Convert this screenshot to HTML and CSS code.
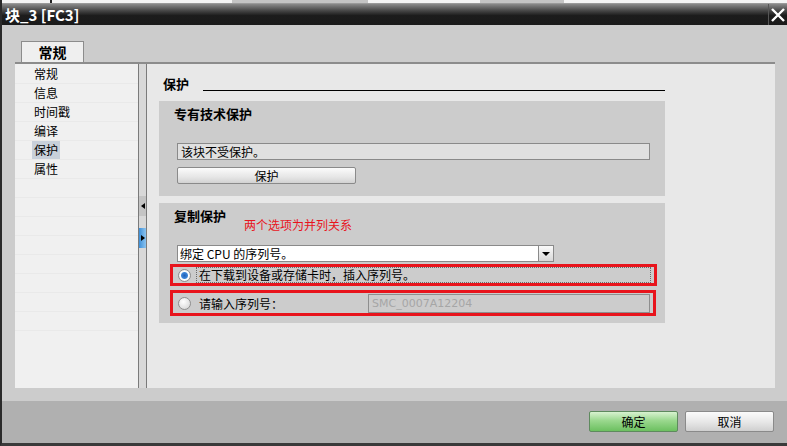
FILE: index.html
```html
<!DOCTYPE html>
<html lang="zh">
<head>
  <meta charset="UTF-8" />
  <title>块_3 [FC3]</title>
  <link rel="stylesheet" href="styles.css">
</head>
<body>
  <div class="window">
    <div class="topstrip">
      <span class="seg seg-a"></span>
      <span class="seg seg-b"></span>
      <span class="seg seg-c"></span>
    </div>
    <div class="titlebar">
      <span class="title">块_3 [FC3]</span>
      <span class="close">
        <svg width="16" height="16" viewBox="0 0 16 16"><path d="M2 2 L14 14 M14 2 L2 14" stroke="#fff" stroke-width="2.4" fill="none"/></svg>
      </span>
    </div>

    <div class="dialog">
      <div class="tabs">
        <div class="tab">常规</div>
      </div>

      <div class="panel">
        <ul class="nav">
          <li>常规</li>
          <li>信息</li>
          <li>时间戳</li>
          <li>编译</li>
          <li><span class="selected">保护</span></li>
          <li>属性</li>
          <li></li>
          <li></li>
          <li></li>
          <li></li>
          <li></li>
          <li></li>
          <li></li>
          <li></li>
        </ul>

        <div class="splitter">
          <div class="split-btn"><span class="tri-left"></span></div>
          <div class="split-btn active"><span class="tri-right"></span></div>
        </div>

        <div class="content">
          <div class="heading">
            <span class="heading-text">保护</span>
            <span class="heading-line"></span>
          </div>

          <div class="section sec-know">
            <div class="sec-title">专有技术保护</div>
            <div class="field">该块不受保护。</div>
            <button class="btn-protect">保护</button>
          </div>

          <div class="section sec-copy">
            <div class="sec-head">
              <span class="sec-title">复制保护</span>
              <span class="note">两个选项为并列关系</span>
            </div>
            <div class="select-row">
              <div class="select">绑定 CPU 的序列号。</div>
              <div class="select-arrow"><span class="tri-down"></span></div>
            </div>
            <div class="option opt-1">
              <span class="radio checked"></span>
              <span class="focus">在下载到设备或存储卡时，插入序列号。</span>
            </div>
            <div class="option opt-2">
              <span class="radio"></span>
              <span class="opt-label">请输入序列号：</span>
              <span class="serial">SMC_0007A12204</span>
            </div>
          </div>
        </div>
      </div>

      <div class="footer">
        <button class="btn btn-ok">确定</button>
        <button class="btn btn-cancel">取消</button>
      </div>
    </div>
  </div>
</body>
</html>
```

FILE: styles.css
```css
* {
  box-sizing: border-box;
}
body {
  margin: 0;
  font-family: "Noto Sans CJK SC", "DejaVu Sans", sans-serif;
  font-size: 12px;
  color: #000;
  background: #ccc;
}
.window {
  width: 787px;
  height: 446px;
  display: flex;
  flex-direction: column;
  overflow: hidden;
  border-left: 2px solid #2a2a2a;
  border-bottom: 3px solid #3a3a3a;
}
.topstrip {
  height: 4px;
  background: #f4f4f4;
  display: flex;
  border-bottom: 1px solid #9a9a9a;
}
.seg {
  height: 3px;
  background: #c4c4c4;
}
.seg-a {
  width: 2px;
  margin-left: 48px;
  background: #222;
}
.seg-b {
  width: 136px;
  margin-left: 180px;
}
.seg-c {
  width: 84px;
  margin-left: 112px;
}
.titlebar {
  height: 21px;
  background: linear-gradient(#8a8a8a 0%, #4a4a4a 30%, #1c1c1c 55%, #1a1a1a 100%);
  display: flex;
  align-items: center;
  justify-content: space-between;
  color: #fff;
}
.title {
  font-size: 15px;
  font-weight: bold;
  padding-left: 3px;
  line-height: 21px;
}
.close {
  width: 19px;
  height: 21px;
  display: flex;
  align-items: center;
  justify-content: center;
  border-left: 1px solid #555;
}
.dialog {
  flex: 1;
  display: flex;
  flex-direction: column;
  background: #cccccc;
}
.tabs {
  height: 37px;
  padding: 16px 0 0 19px;
  display: flex;
}
.tab {
  width: 63px;
  height: 21px;
  background: #efefef;
  border: 1px solid #8c8c8c;
  border-bottom: none;
  font-size: 14px;
  font-weight: bold;
  text-align: center;
  line-height: 20px;
}
.panel {
  height: 326px;
  margin: 0 12px 0 13px;
  border-top: 2px solid #8c8c8c;
  display: flex;
}
.nav {
  width: 123px;
  margin: 0;
  padding: 1px 0 0;
  list-style: none;
  background: #f0f0f0;
  overflow: hidden;
}
.nav li {
  height: 19px;
  line-height: 18px;
  padding-left: 19px;
  border-bottom: 1px solid #e9e9e9;
}
.selected {
  display: inline-block;
  background: #c8d0da;
  padding: 0 2px 0 2px;
  margin-left: -2px;
  height: 18px;
}
.splitter {
  width: 9px;
  background: #d8d8d8;
  border-left: 1px solid #7a7a7a;
  border-right: 1px solid #7a7a7a;
  display: flex;
  flex-direction: column;
}
.split-btn {
  height: 20px;
  margin-top: 132px;
  background: #c4c4c4;
  display: flex;
  align-items: center;
  justify-content: center;
}
.split-btn.active {
  margin-top: 12px;
  background: linear-gradient(90deg, #3d8fd8, #8cc4f0);
}
.tri-left {
  border-right: 4px solid #000;
  border-top: 3px solid transparent;
  border-bottom: 3px solid transparent;
}
.tri-right {
  border-left: 4px solid #000;
  border-top: 3px solid transparent;
  border-bottom: 3px solid transparent;
}
.content {
  flex: 1;
  background: #e8e8e8;
  padding: 13px 0 0 12px;
}
.heading {
  width: 506px;
  display: flex;
  align-items: flex-end;
  height: 14px;
  margin-bottom: 10px;
}
.heading-text {
  font-size: 13px;
  font-weight: bold;
  padding-left: 4px;
  line-height: 14px;
}
.heading-line {
  flex: 1;
  margin-left: 14px;
  border-bottom: 1px solid #000;
}
.section {
  width: 506px;
  background: #cccccc;
  padding-left: 15px;
}
.sec-know {
  height: 95px;
  padding-top: 5px;
  margin-bottom: 7px;
}
.sec-title {
  font-size: 13px;
  font-weight: bold;
  line-height: 16px;
}
.field {
  margin: 21px 0 0 3px;
  width: 473px;
  height: 17px;
  background: #e0e0e0;
  border: 1px solid #8a8a8a;
  line-height: 15px;
  padding-left: 3px;
}
.btn-protect {
  display: block;
  margin: 7px 0 0 3px;
  width: 179px;
  height: 17px;
  padding: 0;
  font-family: inherit;
  font-size: 12px;
  line-height: 14px;
  border: 1px solid #8a8a8a;
  border-radius: 2px;
  background: linear-gradient(#fbfbfb, #e6e6e6 60%, #d2d2d2);
}
.sec-copy {
  height: 120px;
  padding-top: 5px;
}
.sec-head {
  display: flex;
  align-items: flex-start;
  height: 37px;
}
.note {
  color: #e8141c;
  font-size: 12px;
  margin: 9px 0 0 18px;
  line-height: 15px;
}
.select-row {
  display: flex;
  margin-left: 3px;
  height: 17px;
}
.select {
  width: 362px;
  background: #fff;
  border: 1px solid #8a8a8a;
  line-height: 15px;
  padding-left: 2px;
}
.select-arrow {
  width: 15px;
  border: 1px solid #8a8a8a;
  border-left: none;
  background: linear-gradient(#fafafa, #d8d8d8);
  display: flex;
  align-items: center;
  justify-content: center;
}
.tri-down {
  border-top: 4px solid #000;
  border-left: 4px solid transparent;
  border-right: 4px solid transparent;
}
.option {
  width: 487px;
  margin-left: -4px;
  border: 3px solid #e8141c;
  display: flex;
  align-items: center;
  padding-left: 5px;
}
.opt-1 {
  height: 22px;
  margin-top: 2px;
}
.opt-2 {
  height: 26px;
  margin-top: 4px;
  width: 486px;
}
.radio {
  width: 13px;
  height: 13px;
  border-radius: 50%;
  border: 1px solid #8e8e8e;
  background: radial-gradient(circle at 40% 35%, #ffffff, #d0d0d0);
  flex: none;
}
.radio.checked {
  background: radial-gradient(circle, #1e5fb8 0, #3d86d8 3px, #ffffff 4px, #f4f4f4 5px, #cfcfcf 7px);
}
.focus {
  margin-left: 5px;
  flex: 1;
  margin-right: 3px;
  border: 1px dotted #6a6a6a;
  line-height: 14px;
  padding-left: 2px;
}
.opt-label {
  margin-left: 8px;
  width: 169px;
}
.serial {
  width: 282px;
  height: 19px;
  border: 1px solid #8e8e8e;
  background: #cccccc;
  color: #a6a6a6;
  font-family: "DejaVu Sans", sans-serif;
  font-size: 11px;
  line-height: 17px;
  padding-left: 3px;
}
.footer {
  margin-top: 13px;
  flex: 1;
  background: #b0b0b0;
  display: flex;
  justify-content: flex-end;
  align-items: flex-start;
  padding: 10px 13px 0 0;
  gap: 7px;
}
.btn {
  width: 89px;
  height: 21px;
  padding: 0;
  font-family: inherit;
  font-size: 12px;
  border-radius: 2px;
  line-height: 18px;
}
.btn-ok {
  border: 1px solid #5e8a5e;
  background: linear-gradient(#d8f2d0, #9ad88e 45%, #6cc060 100%);
}
.btn-cancel {
  border: 1px solid #8a8a8a;
  background: linear-gradient(#fbfbfb, #e6e6e6 55%, #cfcfcf);
}
```
